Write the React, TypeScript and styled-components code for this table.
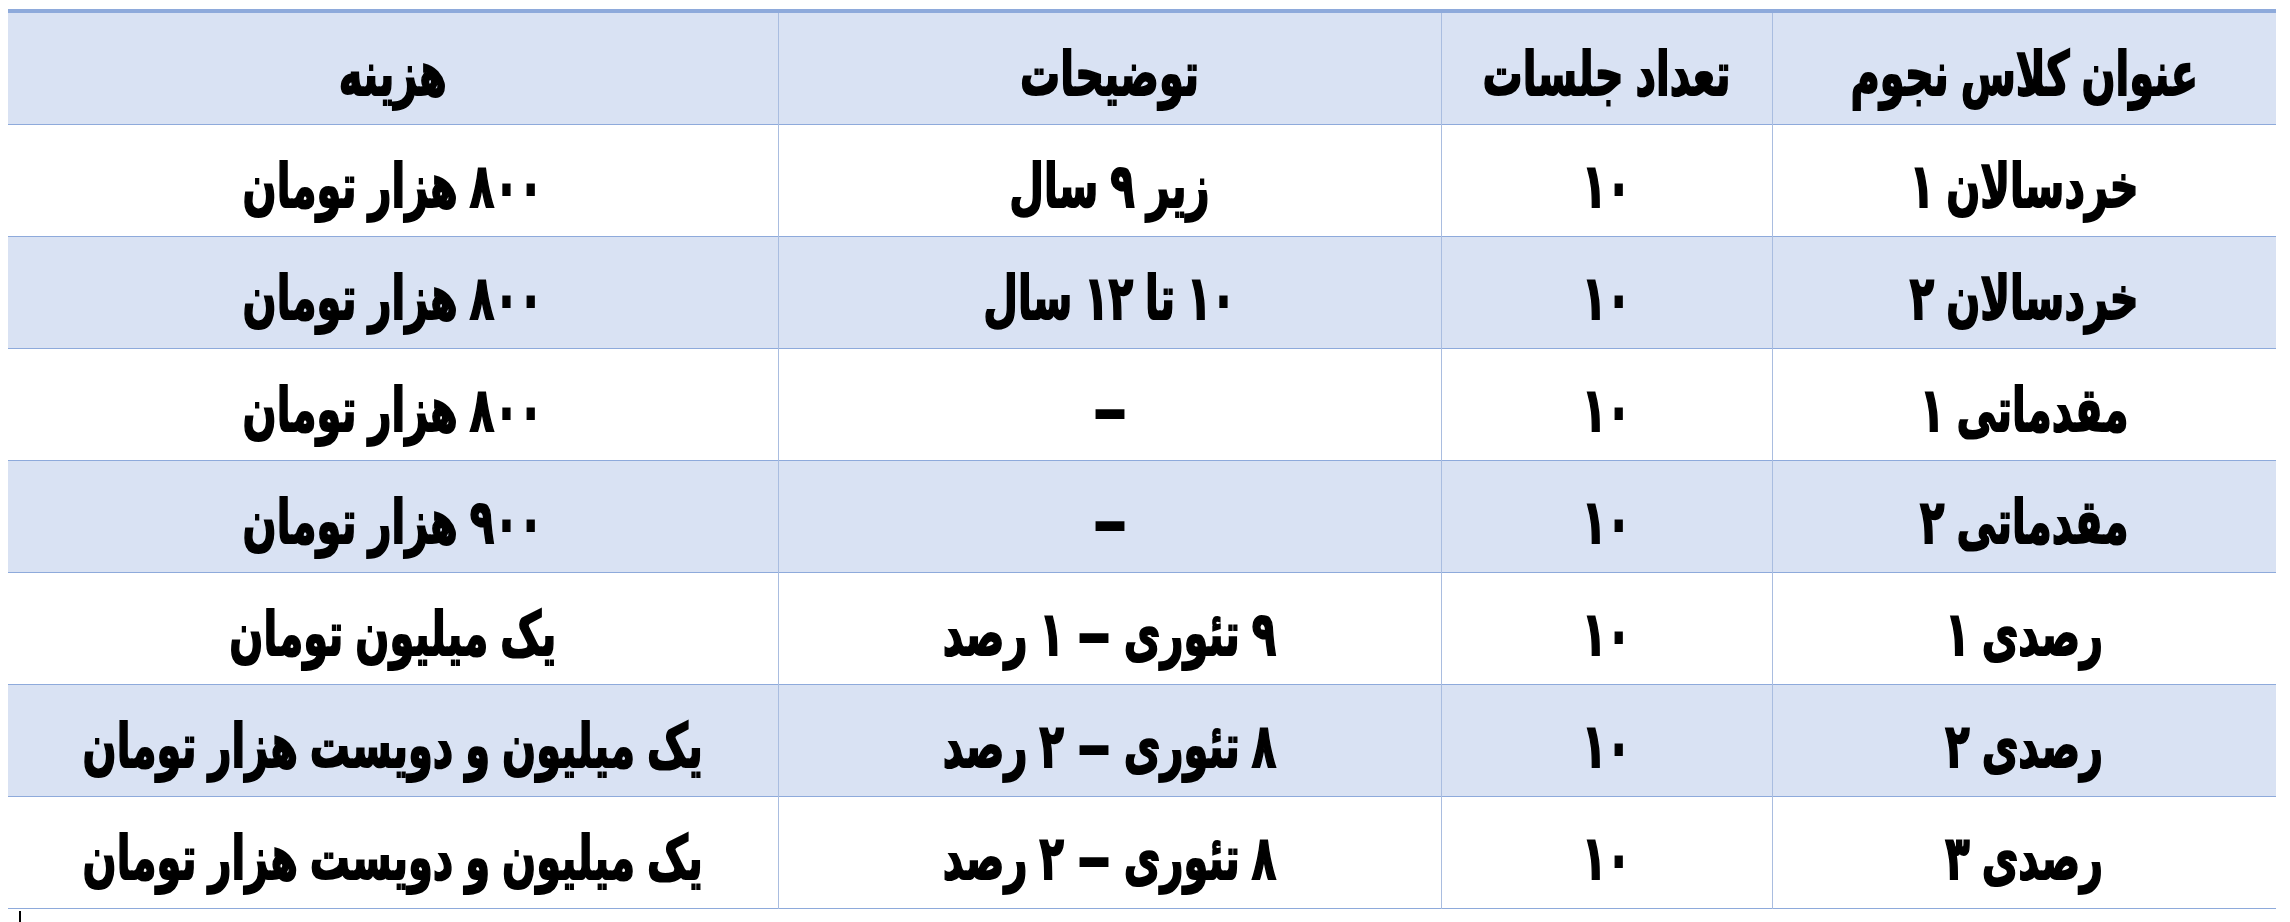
import React from 'react';
import styled, { createGlobalStyle } from 'styled-components';

const GlobalStyle = createGlobalStyle`
  html, body {
    margin: 0;
    padding: 0;
    background: #ffffff;
  }
`;

const Page = styled.div`
  width: 2290px;
  height: 922px;
  padding: 9px 14px 0 8px;
  box-sizing: border-box;
  font-family: 'DejaVu Sans', 'Noto Sans', sans-serif;
  overflow: hidden;
`;

const Table = styled.table`
  direction: rtl;
  width: 2268px;
  table-layout: fixed;
  border-collapse: collapse;
  border-top: 4px solid #8eaadb;
`;

const Row = styled.tr<{ shaded?: boolean }>`
  height: 112px;
  background-color: ${({ shaded }) => (shaded ? '#d9e2f3' : '#ffffff')};
  border-bottom: 1px solid #8eaadb;
`;

const HeaderRow = styled(Row)`
  height: 113px;
`;

const Cell = styled.td`
  padding: 12px 0 0;
  text-align: center;
  vertical-align: middle;
  color: #000000;
  font-size: 40px;
  font-weight: 700;
  white-space: nowrap;
  border-left: 1px solid #a9bde0;

  &:last-child {
    border-left: none;
  }
`;

const HeadCell = styled(Cell).attrs({ as: 'th' })``;

// the original font is a tall, heavy Persian display face
const Label = styled.span`
  display: inline-block;
  transform: scaleY(1.52);
  -webkit-text-stroke: 1.3px #000000;
  word-spacing: -2px;
`;

const Dash = styled.span`
  display: inline-block;
  transform: scaleX(1.7);
  margin: 0 8px;
`;

const Cursor = styled.div`
  width: 2px;
  height: 12px;
  margin: 2px 0 0 11px;
  background: #000000;
`;

const columns = ['504px', '331px', '663px', '770px'];

const rows = [
  ['خردسالان ۱', '۱۰', 'زیر ۹ سال', '۸۰۰ هزار تومان'],
  ['خردسالان ۲', '۱۰', '۱۰ تا ۱۲ سال', '۸۰۰ هزار تومان'],
  ['مقدماتی ۱', '۱۰', '–', '۸۰۰ هزار تومان'],
  ['مقدماتی ۲', '۱۰', '–', '۹۰۰ هزار تومان'],
  ['رصدی ۱', '۱۰', '۹ تئوری – ۱ رصد', 'یک میلیون تومان'],
  ['رصدی ۲', '۱۰', '۸ تئوری – ۲ رصد', 'یک میلیون و دویست هزار تومان'],
  ['رصدی ۳', '۱۰', '۸ تئوری – ۲ رصد', 'یک میلیون و دویست هزار تومان'],
];

const headers = ['عنوان کلاس نجوم', 'تعداد جلسات', 'توضیحات', 'هزینه'];

// stretch the dashes so they read like the wide dash of the original
function renderText(text: string) {
  const parts = text.split('–');
  return parts.map((p, i) => (
    <React.Fragment key={i}>
      {p}
      {i < parts.length - 1 && <Dash>–</Dash>}
    </React.Fragment>
  ));
}

export default function App() {
  return (
    <>
      <GlobalStyle />
      <Page>
        <Table>
          <colgroup>
            {columns.map((w, i) => (
              <col key={i} style={{ width: w }} />
            ))}
          </colgroup>
          <thead>
            <HeaderRow shaded>
              {headers.map((h) => (
                <HeadCell key={h}>
                  <Label>{h}</Label>
                </HeadCell>
              ))}
            </HeaderRow>
          </thead>
          <tbody>
            {rows.map((r, i) => (
              <Row key={i} shaded={i % 2 === 1}>
                {r.map((c, j) => (
                  <Cell key={j}>
                    <Label>{renderText(c)}</Label>
                  </Cell>
                ))}
              </Row>
            ))}
          </tbody>
        </Table>
        <Cursor />
      </Page>
    </>
  );
}
